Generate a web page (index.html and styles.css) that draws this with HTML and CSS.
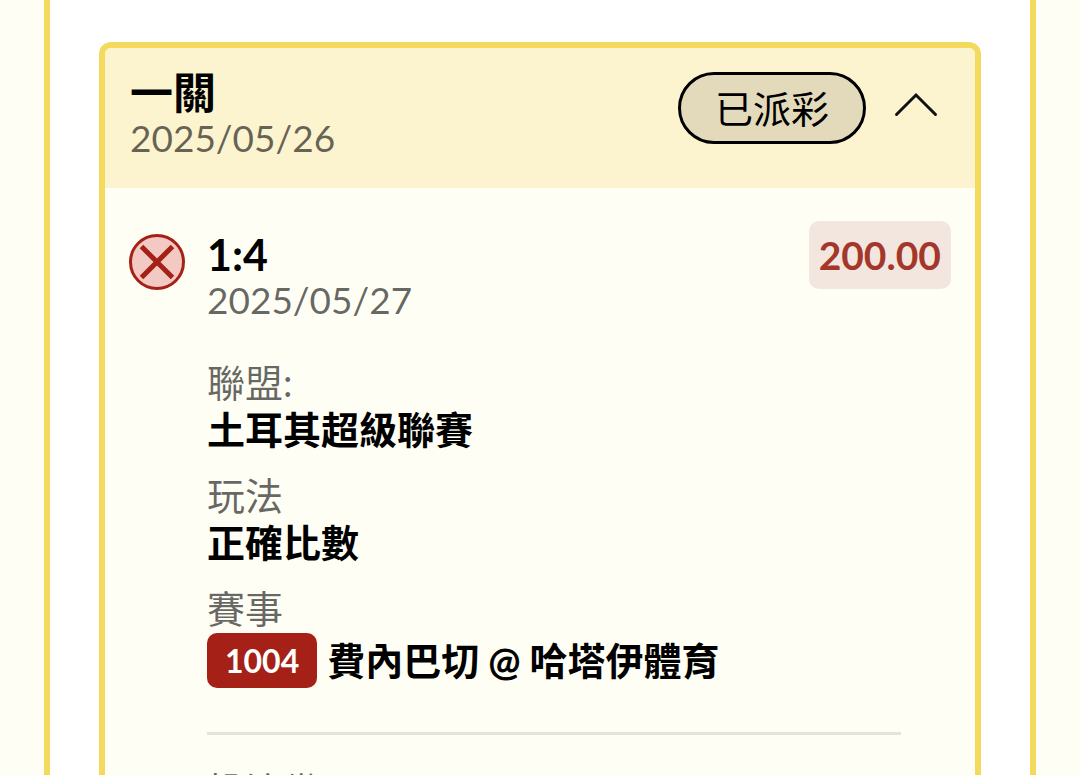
FILE: index.html
```html
<!DOCTYPE html>
<html lang="zh-Hant">
<head>
<meta charset="utf-8">
<meta name="viewport" content="width=device-width, initial-scale=1">
<title>投注紀錄</title>
<link rel="stylesheet" href="styles.css">
</head>
<body>
<main class="panel">
  <article class="bet">
    <header class="bet-head">
      <div>
        <h1 class="bet-title">一關</h1>
        <time class="date" datetime="2025-05-26">2025/05/26</time>
      </div>
      <div class="bet-actions">
        <span class="status">已派彩</span>
        <button class="toggle" type="button" aria-label="收合" aria-expanded="true">
          <svg class="chevron" viewBox="0 0 44 26" aria-hidden="true"><path d="M2.500 22.500 22 3 41.500 22.500"/></svg>
        </button>
      </div>
    </header>
    <section class="leg">
      <svg class="result" viewBox="0 0 56 56" aria-label="未中" role="img"><circle cx="28" cy="28" r="26.500"/><path d="M12.500 12.500 43.500 43.500M43.500 12.500 12.500 43.500"/></svg>
      <div class="leg-body">
        <div class="leg-head">
          <div>
            <h2 class="pick">1:4</h2>
            <time class="date" datetime="2025-05-27">2025/05/27</time>
          </div>
          <span class="odds">200.00</span>
        </div>
        <dl class="details">
          <div><dt>聯盟:</dt><dd>土耳其超級聯賽</dd></div>
          <div><dt>玩法</dt><dd>正確比數</dd></div>
          <div><dt>賽事</dt><dd class="match"><span class="code">1004</span><span class="teams">費內巴切 <span class="at">@</span> 哈塔伊體育</span></dd></div>
        </dl>
        <dl class="details summary">
          <div><dt>投注幾</dt></div>
        </dl>
      </div>
    </section>
  </article>
</main>
</body>
</html>
```
FILE: styles.css
```css
* { box-sizing: border-box; }
html { height: 100%; overflow: hidden; }
body {
  margin: 0;
  height: 100%;
  overflow: hidden;
  padding: 0 44px;
  background: #fffef5;
  color: #000;
  font-family: Lato, "Noto Sans CJK TC", sans-serif;
  font-size: 38px;
  line-height: 46px;
}
h1, h2, dl, dd { margin: 0; }
.panel {
  min-height: 100%;
  padding: 42px 49px 0;
  border: solid #f3da5c;
  border-width: 0 6px;
  background: #fff;
}
.bet {
  border: 6px solid #f3da5c;
  border-radius: 12px;
  background: #fffef5;
  overflow: hidden;
}
.bet-head {
  display: flex;
  justify-content: space-between;
  align-items: flex-start;
  padding: 23px 33px 27px 25px;
  background: #fcf3cf;
}
.bet-title, .pick { font-size: 43px; line-height: 44px; font-weight: 700; }
.date { display: block; color: #0009; font-size: 37px; }
.bet-actions { display: flex; align-items: center; gap: 24px; padding-top: 1px; }
.status {
  padding: 10px 34px;
  border: 3px solid #000;
  border-radius: 36px;
  background: #e3dabb;
  font-weight: 400;
}
.toggle { display: flex; padding: 0 4px 6px; border: 0; background: none; }
.chevron { width: 44px; height: 26px; fill: none; stroke: #111; stroke-width: 3; stroke-linecap: round; }
.leg { display: flex; align-items: flex-start; gap: 22px; padding: 33px 24px 0; }
.result { flex: none; width: 56px; height: 56px; margin-top: 13px; fill: #f3c9c3; stroke: #a52117; stroke-width: 3; }
.result path { stroke-width: 5; }
.leg-body { flex: 1; }
.leg-head { display: flex; justify-content: space-between; align-items: flex-start; }
.leg-head .pick { padding-top: 12px; }
.odds {
  padding: 10px;
  border-radius: 10px;
  background: #f3e6df;
  color: #a4372c;
  font-size: 39px;
  line-height: 48px;
  font-weight: 700;
}
.details { display: grid; gap: 19px; margin: 36px 50px 0 0; line-height: 47px; }
.details dt { color: #0009; }
.details dd { font-weight: 700; }
.match { display: flex; align-items: center; gap: 10px; padding-top: 1px; }
.at { font-weight: 400; -webkit-text-stroke: 1px #000; }
.code {
  padding: 4px 18px;
  border-radius: 10px;
  background: #a52117;
  color: #fff;
  font-size: 32px;
}
.summary { margin-top: 44px; padding-top: 32px; border-top: 3px solid #e3e3dc; }
```
